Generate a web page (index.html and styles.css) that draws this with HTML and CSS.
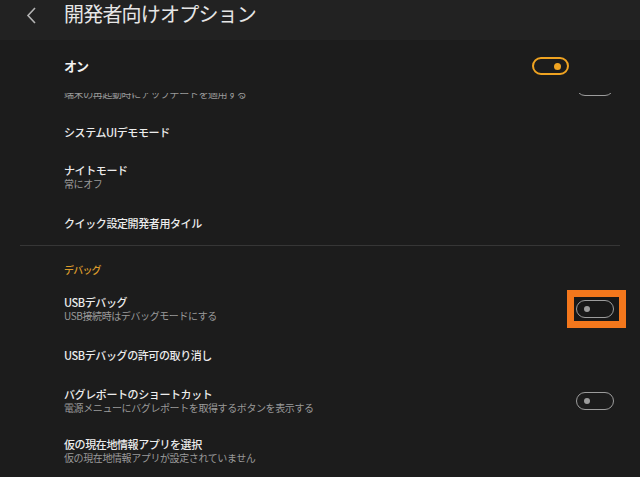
FILE: index.html
```html
<!DOCTYPE html>
<html lang="ja">
<head>
  <meta charset="UTF-8" />
  <meta name="viewport" content="width=device-width, initial-scale=1.0"/>
  <title>開発者向けオプション</title>
  <link rel="stylesheet" href="styles.css">
</head>
<body>
  <header class="appbar">
    <svg class="back" width="14" height="20" viewBox="0 0 14 20">
      <polyline points="11,2 4,9.5 11,17" fill="none" stroke="#b4b4b4" stroke-width="1.6" />
    </svg>
    <h1>開発者向けオプション</h1>
  </header>

  <div class="master">
    <span class="master-label">オン</span>
    <span class="switch switch-on"></span>
  </div>

  <div class="list-view">
    <ul class="list">
      <li class="row">
        <div class="row-text">
          <div class="row-title">自動システムアップデート</div>
          <div class="row-sub">端末の再起動時にアップデートを適用する</div>
        </div>
        <span class="switch"></span>
      </li>
      <li class="row row-short">
        <div class="row-text">
          <div class="row-title">システムUIデモモード</div>
        </div>
      </li>
      <li class="row">
        <div class="row-text">
          <div class="row-title">ナイトモード</div>
          <div class="row-sub">常にオフ</div>
        </div>
      </li>
      <li class="row row-divided">
        <div class="row-text">
          <div class="row-title">クイック設定開発者用タイル</div>
        </div>
      </li>
      <li class="category">デバッグ</li>
      <li class="row">
        <div class="row-text">
          <div class="row-title">USBデバッグ</div>
          <div class="row-sub">USB接続時はデバッグモードにする</div>
        </div>
        <span class="highlight"><span class="switch"></span></span>
      </li>
      <li class="row">
        <div class="row-text">
          <div class="row-title">USBデバッグの許可の取り消し</div>
        </div>
      </li>
      <li class="row">
        <div class="row-text">
          <div class="row-title">バグレポートのショートカット</div>
          <div class="row-sub">電源メニューにバグレポートを取得するボタンを表示する</div>
        </div>
        <span class="switch"></span>
      </li>
      <li class="row row-last">
        <div class="row-text">
          <div class="row-title">仮の現在地情報アプリを選択</div>
          <div class="row-sub">仮の現在地情報アプリが設定されていません</div>
        </div>
      </li>
    </ul>
  </div>
</body>
</html>
```

FILE: styles.css
```css
body {
  margin: 0;
  background-color: #1c1c1c;
  color: #ececec;
  font-family: "Noto Sans CJK JP", "Noto Sans", sans-serif;
  height: 477px;
  overflow: hidden;
}
.appbar {
  height: 40px;
  background-color: #222222;
  display: flex;
  align-items: flex-start;
  padding-left: 24px;
  box-sizing: border-box;
}
.back {
  margin-top: 6px;
}
.appbar h1 {
  margin: 2px 0 0 26px;
  font-size: 20px;
  line-height: 24px;
  font-weight: 400;
  letter-spacing: -0.8px;
  color: #e6e6e6;
}
.master {
  height: 53px;
  display: flex;
  align-items: center;
  justify-content: space-between;
  padding: 0 71px 2px 64px;
  box-sizing: border-box;
}
.master-label {
  font-size: 13px;
  font-weight: 700;
  letter-spacing: -1px;
  color: #f2f2f2;
}
.switch {
  display: block;
  width: 38px;
  height: 18px;
  box-sizing: border-box;
  border: 1.5px solid #9c9c9c;
  border-radius: 9px;
  position: relative;
  flex-shrink: 0;
}
.switch::after {
  content: "";
  position: absolute;
  left: 7px;
  top: 5px;
  width: 6px;
  height: 6px;
  border-radius: 50%;
  background-color: #9c9c9c;
}
.switch-on {
  width: 37px;
  border: 2px solid #efa321;
}
.switch-on::after {
  left: auto;
  right: 6px;
  top: 4px;
  width: 7px;
  height: 7px;
  background-color: #efa321;
}
.highlight {
  display: block;
  border: 7px solid #f3771c;
  padding: 3px 5px 3px 2px;
  margin: -10px -12px -10px -9px;
  background-color: #181818;
}
.list-view {
  height: 384px;
  overflow: hidden;
}
.list {
  list-style: none;
  margin: -29px 0 0 0;
  padding: 0;
}
.row {
  height: 46px;
  display: flex;
  align-items: center;
  justify-content: space-between;
  padding: 0 26px 0 64px;
}
.row-short {
  height: 44px;
}
.row-divided {
  height: 45px;
  margin: 0 20px;
  padding: 0 6px 0 44px;
  border-bottom: 1px solid #363636;
}
.row-last {
  padding-top: 4px;
}
.row-title {
  font-size: 11px;
  line-height: 14px;
  font-weight: 500;
  letter-spacing: -0.4px;
  color: #ececec;
}
.row-sub {
  font-size: 10px;
  line-height: 14px;
  letter-spacing: -0.4px;
  color: #9a9a9a;
}
.category {
  height: 40px;
  box-sizing: border-box;
  padding: 18px 0 0 64px;
  font-size: 10px;
  line-height: 12px;
  font-weight: 500;
  letter-spacing: -0.8px;
  color: #d99a2c;
}
```
